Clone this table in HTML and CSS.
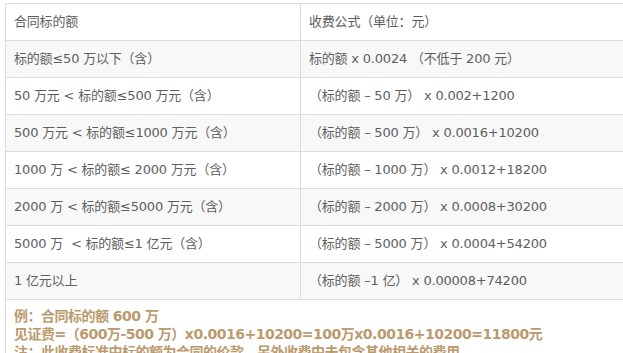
FILE: index.html
```html
<!DOCTYPE html>
<html lang="zh-CN">
<head>
<meta charset="utf-8">
<title>收费标准</title>
<link rel="stylesheet" href="styles.css">
</head>
<body>
<div class="wrap">
<table class="fee">
  <tbody>
    <tr class="odd"><td class="c1">合同标的额</td><td class="c2">收费公式（单位：元）</td></tr>
    <tr class="even"><td>标的额≤50 万以下（含）</td><td>标的额 x 0.0024 （不低于 200 元）</td></tr>
    <tr class="odd"><td>50 万元 &lt; 标的额≤500 万元（含）</td><td>（标的额 – 50 万） x 0.002+1200</td></tr>
    <tr class="even"><td>500 万元 &lt; 标的额≤1000 万元（含）</td><td>（标的额 – 500 万） x 0.0016+10200</td></tr>
    <tr class="odd"><td>1000 万 &lt; 标的额≤ 2000 万元（含）</td><td>（标的额 – 1000 万） x 0.0012+18200</td></tr>
    <tr class="even"><td>2000 万 &lt; 标的额≤5000 万元（含）</td><td>（标的额 – 2000 万） x 0.0008+30200</td></tr>
    <tr class="odd"><td>5000 万 &nbsp;&lt; 标的额≤1 亿元（含）</td><td>（标的额 – 5000 万） x 0.0004+54200</td></tr>
    <tr class="even"><td>1 亿元以上</td><td>（标的额 –1 亿） x 0.00008+74200</td></tr>
    <tr class="note-row"><td colspan="2" class="note">
      <p>例：合同标的额 600 万</p>
      <p>见证费=（600万-500 万）x0.0016+10200=100万x0.0016+10200=11800元</p>
      <p>注：此收费标准中标的额为合同的价款，另外收费中未包含其他相关的费用。</p>
    </td></tr>
  </tbody>
</table>
</div>
</body>
</html>
```
FILE: styles.css
```css
html, body {
  margin: 0;
  padding: 0;
  overflow: hidden;
  background: #fff;
}
.wrap {
  padding: 3px 0 0 5px;
  width: 760px;
}
.fee {
  border-collapse: collapse;
  width: 720px;
  font-family: "DejaVu Sans", "Noto Sans CJK TC", sans-serif;
  font-size: 13px;
  letter-spacing: -0.2px;
  color: #5e5e5e;
}
.fee td {
  border: 1px solid #dcdcdc;
  height: 36px;
  padding: 0 0 0 8px;
  line-height: 36px;
  white-space: nowrap;
  box-sizing: border-box;
}
.fee .c1 { width: 295px; }
.fee tr.even td { background: #f8f8f8; }
.fee tr.odd td { background: #fff; }
.fee td.note {
  border-bottom: none;
  border-right: none;
  padding: 7px 0 0 8px;
  line-height: 18px;
  vertical-align: top;
  font-weight: bold;
  font-size: 14px;
  letter-spacing: -0.5px;
  color: #bb9a6e;
  height: auto;
}
.note p { margin: 0; }
```
